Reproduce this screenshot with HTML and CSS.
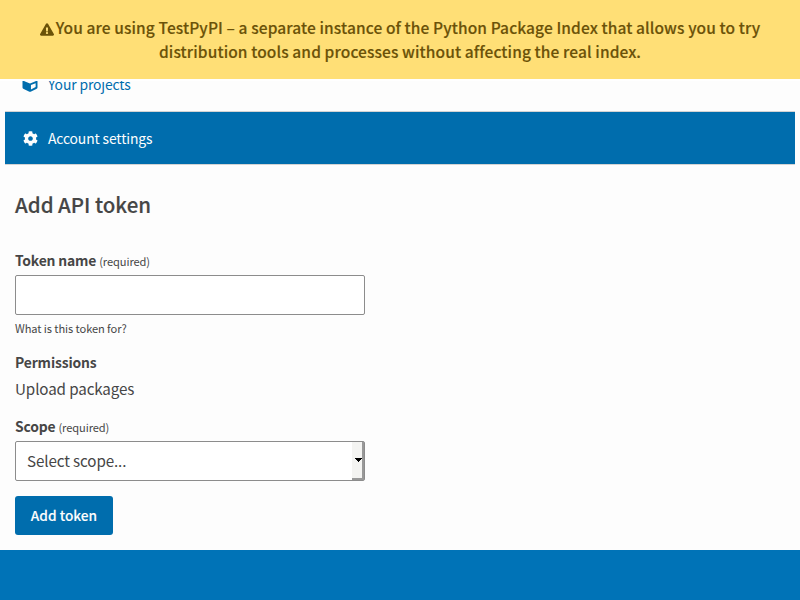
FILE: index.html
```html
<!DOCTYPE html>
<html lang="en">
<head>
<meta charset="utf-8">
<title>Add API token</title>
<link rel="stylesheet" href="styles.css">
</head>
<body>
<div class="notification"><svg class="warning" viewBox="0 0 576 512"><path fill="currentColor" d="M569.5 440C588 472 564.800 512 527.900 512H48.100c-36.900 0-60-40.100-41.600-72L246.400 24c18.500-32 64.700-32 83.200 0l239.900 416zM288 354c-25.400 0-46 20.600-46 46s20.600 46 46 46 46-20.600 46-46-20.600-46-46-46zm-43.700-165.300l7.400 136c.3 6.400 5.600 11.300 12 11.300h48.500c6.400 0 11.600-5 12-11.300l7.400-136c.4-6.900-5.100-12.700-12-12.700h-63.400c-6.900 0-12.300 5.800-11.900 12.700z"/></svg><span>You are using TestPyPI – a separate instance of the Python Package Index that allows you to try<br>distribution tools and processes without affecting the real index.</span></div>
<nav class="menu">
<a class="item projects" href="#"><svg viewBox="0 0 512 512"><path fill="currentColor" d="M239.100 6.300l-208 78c-18.700 7-31.100 25-31.100 45v225.100c0 18.200 10.300 34.800 26.500 42.900l208 104c13.500 6.800 29.400 6.800 42.900 0l208-104c16.300-8.100 26.500-24.800 26.500-42.900V129.300c0-20-12.400-37.900-31.100-44.900l-208-78C262 2.200 250 2.200 239.100 6.300zM256 68.400l192 72v1.100l-192 78-192-78v-1.100l192-72zm32 356V275.500l160-65v133.900l-160 80z"/></svg>Your projects</a>
<a class="item active" href="#"><svg viewBox="0 0 512 512"><path fill="currentColor" d="M487.400 315.700l-42.600-24.600c4.300-23.200 4.300-47 0-70.200l42.600-24.600c4.900-2.800 7.100-8.600 5.500-14-11.100-35.600-30-67.800-54.700-94.600-3.800-4.100-10-5.100-14.800-2.300L380.800 110c-17.900-15.400-38.500-27.300-60.800-35.100V25.800c0-5.600-3.900-10.500-9.400-11.700-36.700-8.200-74.300-7.800-109.200 0-5.500 1.200-9.400 6.100-9.400 11.700V75c-22.200 7.900-42.800 19.800-60.800 35.100L88.700 85.500c-4.900-2.800-11-1.900-14.800 2.300-24.700 26.700-43.600 58.900-54.700 94.600-1.700 5.400.6 11.200 5.500 14L67.300 221c-4.300 23.200-4.300 47 0 70.200l-42.600 24.600c-4.900 2.800-7.100 8.600-5.500 14 11.100 35.600 30 67.800 54.700 94.600 3.800 4.100 10 5.100 14.800 2.300l42.600-24.600c17.900 15.400 38.500 27.300 60.800 35.100v49.200c0 5.600 3.900 10.500 9.400 11.700 36.700 8.200 74.300 7.800 109.200 0 5.500-1.200 9.400-6.100 9.400-11.700v-49.200c22.200-7.900 42.800-19.800 60.800-35.100l42.600 24.600c4.900 2.800 11 1.900 14.800-2.300 24.700-26.700 43.600-58.900 54.700-94.600 1.500-5.500-.7-11.300-5.600-14.100zM256 336c-44.100 0-80-35.900-80-80s35.900-80 80-80 80 35.900 80 80-35.900 80-80 80z"/></svg>Account settings</a>
</nav>
<main>
<h1>Add API token</h1>
<form>
<label class="label" for="name"><b>Token name</b> <small>(required)</small></label>
<input id="name" type="text">
<p class="help">What is this token for?</p>
<p class="label perm"><b>Permissions</b></p>
<p class="value">Upload packages</p>
<div class="label"><b>Scope</b> <small>(required)</small></div>
<div class="select" tabindex="0"><span>Select scope...</span><span class="arrow"><svg viewBox="0 0 7 4"><path d="M0 0h7v1H6v1H5v1H4v1H3V3H2V2H1V1H0z"/></svg></span></div>
<button type="button">Add token</button>
</form>
</main>
<footer></footer>
</body>
</html>
```
FILE: styles.css
```css
* { box-sizing: border-box; }
html { height: 600px; overflow: hidden; }
body {
  margin: 0;
  height: 600px;
  overflow: hidden;
  display: flex;
  flex-direction: column;
  background: #fdfdfd;
  color: #464646;
  font-family: "Noto Sans CJK SC", "Open Sans", sans-serif;
  font-size: 15.200px;
  letter-spacing: -0.12px;
}
p, h1 { margin: 0; }
.notification {
  position: relative;
  z-index: 1;
  flex: none;
  height: 81px;
  padding-top: 15px;
  background: #ffdf76;
  border-bottom: 2px solid #fff;
  color: #6b5208;
  text-align: center;
  font-size: 15.500px;
  font-weight: 500;
  letter-spacing: 0.105px;
  -webkit-text-stroke: 0.15px;
  line-height: 24px;
  white-space: nowrap;
}
.warning { width: 14px; height: 13px; vertical-align: -2px; margin-right: 2px; }
.menu { flex: none; margin: -22px 5px 0; }
.item {
  display: flex;
  align-items: center;
  height: 53px;
  padding-left: 18px;
  border-bottom: 1px solid #d3d3d3;
  color: #006dad;
  font-size: 13.900px;
  letter-spacing: -0.13px;
  text-decoration: none;
}
.item svg { width: 15px; height: 15px; margin-right: 10px; }
.projects { padding-bottom: 2px; }
.projects svg { width: 16px; margin: 0 10px 0 -1px; }
.active { background: #006dad; color: #fdfdfd; }
main { flex: none; padding: 23px 15px 0; height: 385px; }
h1 {
  font-size: 20.500px;
  font-weight: 500;
  letter-spacing: -0.02px;
  -webkit-text-stroke: 0.15px;
  line-height: 32px;
  margin-bottom: 28px;
}
.label { display: block; height: 27px; line-height: 24px; font-size: 13.900px; white-space: nowrap; }
.label b { font-weight: 700; letter-spacing: -0.18px; }
.label small, .help { font-size: 11.100px; letter-spacing: -0.08px; }
input {
  display: block;
  width: 350px;
  height: 40px;
  border: 1px solid #8c8c8c;
  border-radius: 2px;
  background: #fff;
  outline: none;
}
.help { line-height: 20px; height: 35px; padding-top: 3px; }
.perm { height: 26px; }
.perm b { letter-spacing: -0.14px; }
.value { height: 38px; line-height: 25px; }
.select {
  display: flex;
  justify-content: space-between;
  width: 350px;
  height: 40px;
  padding-left: 11px;
  border: 1px solid #8c8c8c;
  border-radius: 2px;
  background: #fff;
  line-height: 37px;
}
.arrow {
  display: flex;
  align-items: center;
  justify-content: flex-end;
  width: 12px;
  background: #f4f4f2;
  border-right: 2px solid #999;
  border-bottom: 2px solid #999;
}
.arrow svg { width: 7px; height: 4px; }
button {
  display: block;
  width: 98px;
  height: 39px;
  margin-top: 15px;
  padding: 0;
  border: 0;
  border-radius: 3px;
  background: #006dad;
  color: #fdfdfd;
  font: 500 13.700px/37px "Noto Sans CJK SC", sans-serif;
  -webkit-text-stroke: 0.1px;
}
footer { flex: 1; background: #0073b7; }
```
